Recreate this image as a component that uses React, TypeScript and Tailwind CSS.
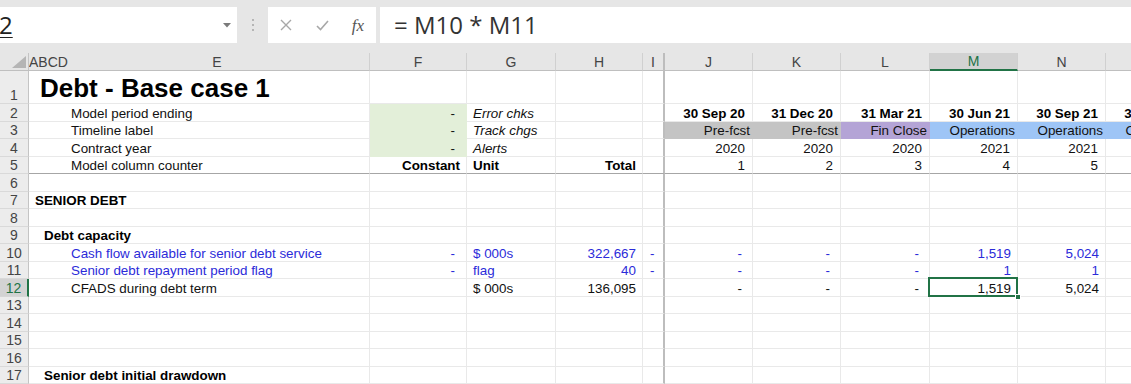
import React from 'react';

type Cell = { t: React.ReactNode; c?: string; fill?: string } | null;

const GRID = 'grid grid-rows-[minmax(0,1fr)] grid-cols-[29px_341px_97px_89px_87px_22px_88px_88px_89px_88px_88px_88px]';
const BLUE = 'text-[#2b2bd9]';
const NUM = 'justify-end pr-[6px]';
const DASH = 'justify-end pr-[10px]';
const DATE = 'justify-end pr-[7px]';
const TL = 'justify-end pr-[2px]';

const GREEN = 'bg-[#e3efd9]';
const GREY = 'bg-[#c4c4c4]';
const PURPLE = 'bg-[#b4a4d6]';
const SKY = 'bg-[#9ec5f6]';

const rowHeight = (n: number) => (n === 1 ? 'h-[33px]' : n % 2 === 0 ? 'h-[18px]' : 'h-[17px]');

const Row = ({ n, cells = [], sel, freeze }: { n: number; cells?: Cell[]; sel?: number; freeze?: boolean }) => {
  const cols = Array.from({ length: 11 }, (_, i) => cells[i] ?? null);
  return (
    <div className={`${GRID} ${rowHeight(n)}`}>
      <div
        className={
          sel !== undefined
            ? 'flex items-end justify-center bg-[#d3d3d3] border-r-2 border-r-[#217346] border-b border-b-[#d6d6d6] text-[14px] leading-[16px] text-[#217346]'
            : 'flex items-end justify-center bg-[#ececec] border-r border-r-[#c4c4c4] border-b border-b-[#d9d9d9] text-[14px] leading-[16px] text-[#444]'
        }
      >
        {n}
      </div>
      {cols.map((cell, i) => {
        const right =
          i === 4
            ? 'border-r-2 border-r-[#bdbdbd]'
            : cell?.fill
            ? 'border-r border-r-transparent'
            : 'border-r border-r-[#e9e9e9]';
        const bottom = freeze
          ? 'border-b border-b-[#a6a6a6]'
          : cell?.fill
          ? 'border-b border-b-transparent'
          : 'border-b border-b-[#e9e9e9]';
        return (
          <div
            key={i}
            className={`relative flex items-end whitespace-nowrap ${right} ${bottom} ${cell?.fill ?? ''} ${cell?.c ?? 'text-[13.4px] leading-[15px]'}`}
          >
            {cell?.t}
            {sel === i && (
              <>
                <div className="absolute left-[-2px] top-[-2px] right-[-1px] bottom-[-1px] border-2 border-[#217346] z-10" />
                <div className="absolute right-[-4px] bottom-[-4px] w-[6px] h-[6px] bg-[#217346] border border-white z-20" />
              </>
            )}
          </div>
        );
      })}
    </div>
  );
};

const T = 'text-[13.4px] leading-[15px]';
const date = (t: string): Cell => ({ t, c: `${T} ${DATE} font-bold text-black` });
const plain = (t: string, c: string): Cell => ({ t, c: `${T} ${c}` });
const num = (t: string, c = 'text-[#111]'): Cell => ({ t, c: `${T} ${NUM} ${c}` });
const dash = (c = 'text-[#111]'): Cell => ({ t: '-', c: `${T} ${DASH} ${c}` });
const fill = (t: string, f: string, c: string): Cell => ({ t, fill: f, c: `${T} ${c}` });

const headers = ['F', 'G', 'H', 'I', 'J', 'K', 'L', 'M', 'N', 'O'];

export default function App() {
  return (
    <div className="w-[1131px] h-[384px] overflow-hidden bg-white font-['Liberation_Sans',Arial,sans-serif] text-[#111]">
      {/* formula bar */}
      <div className="h-[53px] bg-[#e6e6e6] flex items-start pt-[7px] font-['Open_Sans',sans-serif]">
        <div className="w-[237px] h-[36px] bg-white flex items-center justify-between pr-[6px]">
          <span className="text-[24px] leading-none text-[#222] underline underline-offset-[3px] decoration-1 -ml-[1px]">2</span>
          <svg width="8" height="5" viewBox="0 0 8 5">
            <path d="M0 0h8L4 4.5z" fill="#7a7a7a" />
          </svg>
        </div>
        <div className="w-[31px] h-[36px] flex flex-col items-center justify-center gap-[3px]">
          <span className="w-[2px] h-[2px] bg-[#b5b5b5]" />
          <span className="w-[2px] h-[2px] bg-[#b5b5b5]" />
          <span className="w-[2px] h-[2px] bg-[#b5b5b5]" />
        </div>
        <div className="w-[108px] h-[36px] bg-white grid grid-cols-3 items-center justify-items-center">
          <svg width="12" height="12" viewBox="0 0 12 12">
            <path d="M1 1l10 10M11 1L1 11" stroke="#a8a8a8" strokeWidth="1.4" fill="none" />
          </svg>
          <svg width="13" height="11" viewBox="0 0 13 11">
            <path d="M1 6l3.5 3.5L12 1" stroke="#a8a8a8" strokeWidth="1.6" fill="none" />
          </svg>
          <span className="font-['Liberation_Serif',serif] italic text-[17px] text-[#555] leading-none">fx</span>
        </div>
        <div className="ml-[4px] flex-1 h-[36px] bg-white flex items-center pl-[14px] text-[24px] text-[#333] leading-none">
          = M10 * M11
        </div>
      </div>

      {/* column headers */}
      <div className={`${GRID} h-[18px] bg-[#e6e6e6] text-[14px] leading-[16px] text-[#444]`}>
        <div className="relative border-r border-r-[#c4c4c4] border-b border-b-[#bfbfbf]">
          <svg className="absolute right-[2px] bottom-[2px]" width="14" height="12" viewBox="0 0 14 12">
            <path d="M14 0v12H0z" fill="#b5b5b5" />
          </svg>
        </div>
        <div className="flex items-center border-r border-r-[#d0d0d0] border-b border-b-[#bfbfbf]">
          <span className="w-[36px]">ABCD</span>
          <span className="flex-1 text-center">E</span>
        </div>
        {headers.map((h) =>
          h === 'M' ? (
            <div key={h} className="flex items-center justify-center bg-[#d2d2d2] text-[#217346] border-r border-r-[#d0d0d0] border-b-2 border-b-[#217346]">
              {h}
            </div>
          ) : h === 'I' ? (
            <div key={h} className="flex items-center justify-center border-r-2 border-r-[#bdbdbd] border-b border-b-[#bfbfbf]">
              {h}
            </div>
          ) : (
            <div key={h} className="flex items-center justify-center border-r border-r-[#d0d0d0] border-b border-b-[#bfbfbf]">
              {h}
            </div>
          )
        )}
      </div>

      {/* sheet */}
      <Row n={1} cells={[{ t: 'Debt - Base case 1', c: 'pl-[11px] text-[26px] leading-[30px] font-bold text-black' }]} />
      <Row
        n={2}
        cells={[
          plain('Model period ending', 'pl-[42px]'),
          fill('-', GREEN, 'justify-end pr-[11px]'),
          plain('Error chks', 'pl-[6px] italic'),
          null,
          null,
          date('30 Sep 20'),
          date('31 Dec 20'),
          date('31 Mar 21'),
          date('30 Jun 21'),
          date('30 Sep 21'),
          date('31 Dec 21'),
        ]}
      />
      <Row
        n={3}
        cells={[
          plain('Timeline label', 'pl-[42px]'),
          fill('-', GREEN, 'justify-end pr-[11px]'),
          plain('Track chgs', 'pl-[6px] italic'),
          null,
          null,
          fill('Pre-fcst', GREY, TL),
          fill('Pre-fcst', GREY, TL),
          fill('Fin Close', PURPLE, TL),
          fill('Operations', SKY, TL),
          fill('Operations', SKY, TL),
          fill('Operations', SKY, TL),
        ]}
      />
      <Row
        n={4}
        cells={[
          plain('Contract year', 'pl-[42px]'),
          fill('-', GREEN, 'justify-end pr-[11px]'),
          plain('Alerts', 'pl-[6px] italic'),
          null,
          null,
          plain('2020', DATE),
          plain('2020', DATE),
          plain('2020', DATE),
          plain('2021', DATE),
          plain('2021', DATE),
          plain('2021', DATE),
        ]}
      />
      <Row
        n={5}
        freeze
        cells={[
          plain('Model column counter', 'pl-[42px]'),
          plain('Constant', `${NUM} font-bold text-black`),
          plain('Unit', 'pl-[6px] font-bold text-black'),
          plain('Total', `${NUM} font-bold text-black`),
          null,
          plain('1', DATE),
          plain('2', DATE),
          plain('3', DATE),
          plain('4', DATE),
          plain('5', DATE),
          plain('6', DATE),
        ]}
      />
      <Row n={6} />
      <Row n={7} cells={[plain('SENIOR DEBT', 'pl-[6px] font-bold text-black')]} />
      <Row n={8} />
      <Row n={9} cells={[plain('Debt capacity', 'pl-[15px] font-bold text-black')]} />
      <Row
        n={10}
        cells={[
          plain('Cash flow available for senior debt service', `pl-[42px] ${BLUE}`),
          plain('-', `justify-end pr-[11px] ${BLUE}`),
          plain('$ 000s', `pl-[6px] ${BLUE}`),
          num('322,667', BLUE),
          plain('-', `pl-[7px] ${BLUE}`),
          dash(BLUE),
          dash(BLUE),
          dash(BLUE),
          num('1,519', BLUE),
          num('5,024', BLUE),
        ]}
      />
      <Row
        n={11}
        cells={[
          plain('Senior debt repayment period flag', `pl-[42px] ${BLUE}`),
          plain('-', `justify-end pr-[11px] ${BLUE}`),
          plain('flag', `pl-[6px] ${BLUE}`),
          num('40', BLUE),
          plain('-', `pl-[7px] ${BLUE}`),
          dash(BLUE),
          dash(BLUE),
          dash(BLUE),
          num('1', BLUE),
          num('1', BLUE),
        ]}
      />
      <Row
        n={12}
        sel={8}
        cells={[
          plain('CFADS during debt term', 'pl-[42px]'),
          null,
          plain('$ 000s', 'pl-[6px]'),
          num('136,095'),
          null,
          dash(),
          dash(),
          dash(),
          num('1,519'),
          num('5,024'),
        ]}
      />
      <Row n={13} />
      <Row n={14} />
      <Row n={15} />
      <Row n={16} />
      <Row n={17} cells={[plain('Senior debt initial drawdown', 'pl-[15px] font-bold text-black')]} />
    </div>
  );
}
